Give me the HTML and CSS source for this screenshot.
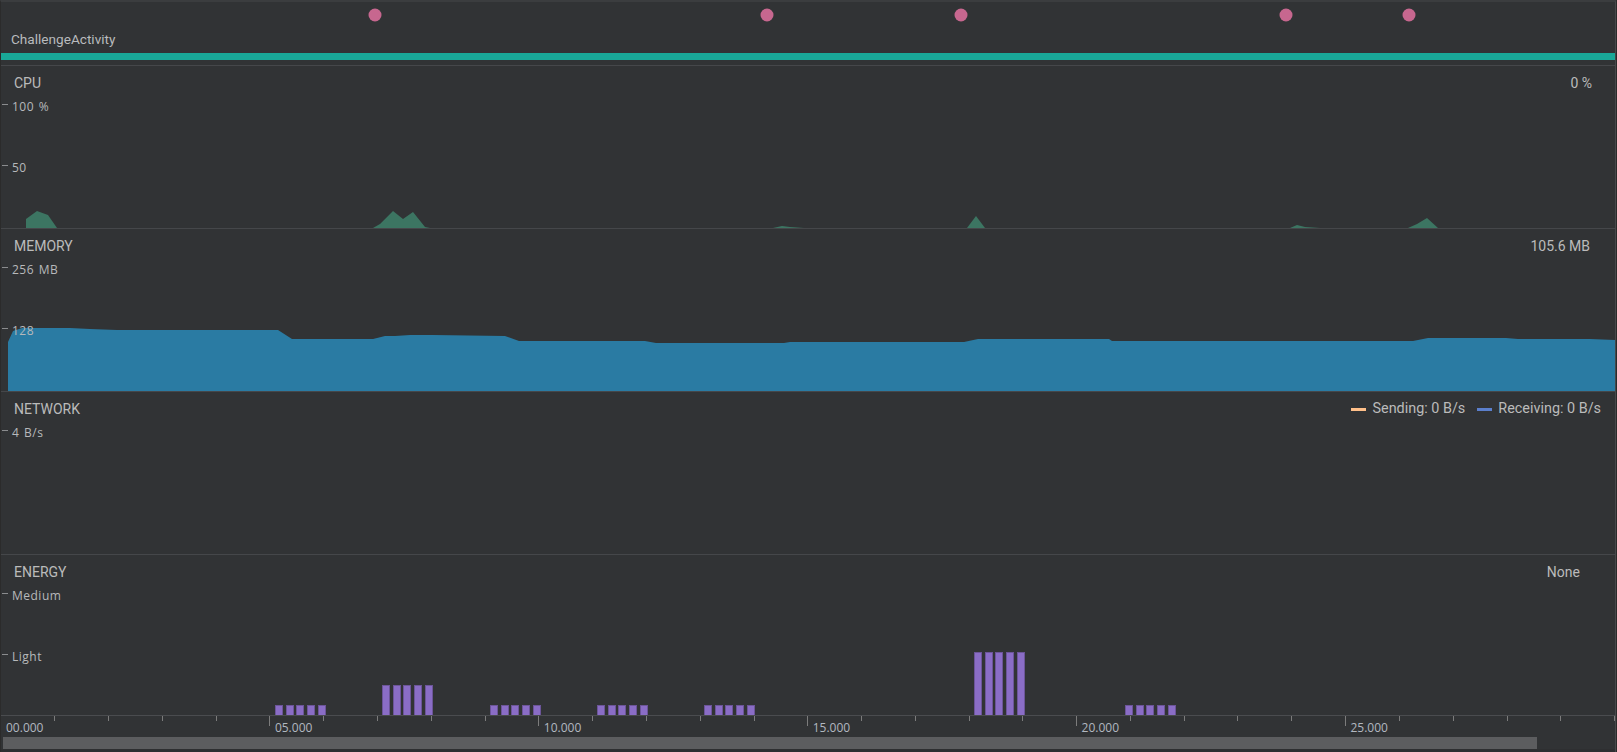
FILE: index.html
```html
<!DOCTYPE html>
<html>
<head>
<meta charset="utf-8">
<title>Profiler</title>
<link rel="stylesheet" href="styles.css">
</head>
<body>
<div class="app">
  <div class="events">
    <svg class="dots" viewBox="1 2 1614 26" width="1614" height="26">
      <g fill="#c7678f">
        <circle cx="375" cy="15" r="6.5"/>
        <circle cx="767" cy="15" r="6.5"/>
        <circle cx="961" cy="15" r="6.5"/>
        <circle cx="1286" cy="15" r="6.5"/>
        <circle cx="1409" cy="15" r="6.5"/>
      </g>
    </svg>
    <div class="activity">ChallengeActivity</div>
  </div>
  <div class="lifecycle"></div>
  <div class="gap"></div>

  <section class="monitor">
    <svg class="chart" viewBox="1 66 1614 162" width="1614" height="162">
      <g fill="#3c7562">
        <polygon points="26,228 26,219 37,211 48,215 57,228"/>
        <polygon points="373,228 380,224 393,211 403,219 413,212 425,227 430,228"/>
        <polygon points="773,228 782,226 790,227 804,228"/>
        <polygon points="967,228 976,216 985,228"/>
        <polygon points="1290,228 1297,225 1305,227 1320,228"/>
        <polygon points="1408,228 1417,224 1427,218 1438,228"/>
      </g>
    </svg>
    <div class="overlay">
      <div class="head"><span>CPU</span><span class="value">0 %</span></div>
      <div class="ylabel first"><span class="tick"></span><span>100 %</span></div>
      <div class="ylabel second"><span class="tick"></span><span>50</span></div>
    </div>
  </section>

  <section class="monitor">
    <svg class="chart" viewBox="1 229 1614 162" width="1614" height="162">
      <polygon fill="#2a7ba3" points="8,391 8,342 13,331 22,328 70,328 90,329 117,330 278,330 292,339 373,339 385,336 395,336 410,335 433,335 505,336 519,341 645,341 656,343 784,343 790,342 964,342 978,339 1109,339 1112,341 1413,341 1428,338 1506,338 1518,339 1590,339 1615,340 1615,391"/>
    </svg>
    <div class="overlay">
      <div class="head mem"><span>MEMORY</span><span class="value">105.6 MB</span></div>
      <div class="ylabel first"><span class="tick"></span><span>256 MB</span></div>
      <div class="ylabel second"><span class="tick"></span><span>128</span></div>
    </div>
  </section>

  <section class="monitor">
    <div class="overlay">
      <div class="head net">
        <span>NETWORK</span>
        <span class="legend">
          <span class="item"><span class="swatch send"></span>Sending: 0 B/s</span>
          <span class="item"><span class="swatch recv"></span>Receiving: 0 B/s</span>
        </span>
      </div>
      <div class="ylabel first"><span class="tick"></span><span>4 B/s</span></div>
    </div>
  </section>

  <section class="monitor energy">
    <svg class="chart" viewBox="1 555 1614 160" width="1614" height="160">
      <g fill="#8a6dc6" stroke="#6c5599" stroke-width="1">
        <rect x="275.5" y="705.5" width="7" height="10"/>
        <rect x="286.5" y="705.5" width="7" height="10"/>
        <rect x="296.5" y="705.5" width="7" height="10"/>
        <rect x="307.5" y="705.5" width="7" height="10"/>
        <rect x="318.5" y="705.5" width="7" height="10"/>

        <rect x="382.5" y="685.5" width="7" height="30"/>
        <rect x="393.5" y="685.5" width="7" height="30"/>
        <rect x="403.5" y="685.5" width="7" height="30"/>
        <rect x="414.5" y="685.5" width="7" height="30"/>
        <rect x="425.5" y="685.5" width="7" height="30"/>

        <rect x="490.5" y="705.5" width="7" height="10"/>
        <rect x="501.5" y="705.5" width="7" height="10"/>
        <rect x="511.5" y="705.5" width="7" height="10"/>
        <rect x="522.5" y="705.5" width="7" height="10"/>
        <rect x="533.5" y="705.5" width="7" height="10"/>

        <rect x="597.5" y="705.5" width="7" height="10"/>
        <rect x="608.5" y="705.5" width="7" height="10"/>
        <rect x="618.5" y="705.5" width="7" height="10"/>
        <rect x="629.5" y="705.5" width="7" height="10"/>
        <rect x="640.5" y="705.5" width="7" height="10"/>

        <rect x="704.5" y="705.5" width="7" height="10"/>
        <rect x="715.5" y="705.5" width="7" height="10"/>
        <rect x="725.5" y="705.5" width="7" height="10"/>
        <rect x="736.5" y="705.5" width="7" height="10"/>
        <rect x="747.5" y="705.5" width="7" height="10"/>

        <rect x="974.5" y="652.5" width="7" height="63"/>
        <rect x="985.5" y="652.5" width="7" height="63"/>
        <rect x="995.5" y="652.5" width="7" height="63"/>
        <rect x="1006.5" y="652.5" width="7" height="63"/>
        <rect x="1017.5" y="652.5" width="7" height="63"/>

        <rect x="1125.5" y="705.5" width="7" height="10"/>
        <rect x="1136.5" y="705.5" width="7" height="10"/>
        <rect x="1146.5" y="705.5" width="7" height="10"/>
        <rect x="1157.5" y="705.5" width="7" height="10"/>
        <rect x="1168.5" y="705.5" width="7" height="10"/>
      </g>
    </svg>
    <div class="overlay">
      <div class="head en"><span>ENERGY</span><span class="value">None</span></div>
      <div class="ylabel first"><span class="tick"></span><span>Medium</span></div>
      <div class="ylabel second"><span class="tick"></span><span>Light</span></div>
    </div>
  </section>

  <div class="axis">
    <svg class="ticks" viewBox="1 716 1614 21" width="1614" height="21">
      <path stroke="#7c7c7c" stroke-width="1" fill="none" shape-rendering="crispEdges"
        d="M54.5 716v5 M108.5 716v5 M162.5 716v5 M216.5 716v5 M269.5 716v10
           M323.5 716v5 M377.5 716v5 M431.5 716v5 M485.5 716v5 M538.5 716v10
           M592.5 716v5 M646.5 716v5 M700.5 716v5 M754.5 716v5 M807.5 716v10
           M861.5 716v5 M915.5 716v5 M969.5 716v5 M1022.5 716v5 M1076.5 716v10
           M1130.5 716v5 M1184.5 716v5 M1237.5 716v5 M1291.5 716v5 M1345.5 716v10
           M1399.5 716v5 M1453.5 716v5 M1507.5 716v5 M1560.5 716v5 M1614.5 716v5"/>
    </svg>
    <div class="labels">
      <span>00.000</span><span>05.000</span><span>10.000</span><span>15.000</span><span>20.000</span><span>25.000</span>
    </div>
  </div>
  <div class="scroll"><div class="thumb"></div></div>
</div>
</body>
</html>
```
FILE: styles.css
```css
html, body {
  margin: 0;
  padding: 0;
  background: #2b2b2b;
}

.app {
  width: 1616px;
  height: 752px;
  box-sizing: border-box;
  background: #313335;
  border-top: 2px solid #3b3d3f;
  border-left: 1px solid #2b2b2b;
  border-right: 1px solid #47494b;
  display: flex;
  flex-direction: column;
  font-family: Roboto, "Noto Sans", sans-serif;
  color: #bbbbbb;
  overflow: hidden;
}

.events {
  height: 51px;
  display: flex;
  flex-direction: column;
}

.dots {
  display: block;
}

.activity {
  margin-top: 3px;
  padding-left: 10px;
  font-size: 13.6px;
  line-height: 16px;
  color: #b9bbbd;
}

.lifecycle {
  height: 7px;
  background: #19a898;
}

.gap {
  height: 5px;
  border-bottom: 1px solid #45474a;
}

.monitor {
  height: 162px;
  display: grid;
  border-bottom: 1px solid #45474a;
}

.monitor.energy {
  height: 160px;
  border-bottom-color: #4a4c4f;
}

.chart {
  grid-area: 1 / 1;
  display: block;
}

.overlay {
  grid-area: 1 / 1;
  display: flex;
  flex-direction: column;
  padding-top: 9px;
}

.head {
  display: flex;
  justify-content: space-between;
  align-items: center;
  height: 16px;
  line-height: 16px;
  font-size: 14px;
  padding: 0 23px 0 13px;
}

.head.mem {
  padding-right: 25px;
}

.head.en {
  padding-right: 35px;
}

.head.net {
  padding-right: 14px;
}

.legend {
  display: flex;
  gap: 12px;
  font-size: 14.4px;
}

.legend .item {
  display: flex;
  align-items: center;
}

.swatch {
  width: 15px;
  height: 3px;
  margin-right: 6px;
}

.swatch.send {
  background: #ffc08a;
}

.swatch.recv {
  background: #5b7fcc;
}

.ylabel {
  display: flex;
  align-items: flex-start;
  height: 14px;
  margin-left: 1px;
  font-family: "Open Sans", "Liberation Sans", sans-serif;
  font-size: 12px;
  line-height: 14px;
  letter-spacing: 0.5px;
  word-spacing: 1px;
  color: #b7b9bb;
}

.ylabel.first {
  margin-top: 9px;
}

.ylabel.second {
  margin-top: 47px;
}

.tick {
  width: 6px;
  height: 1px;
  margin-top: 4px;
  margin-right: 4px;
  background: #8a8c8e;
}

.axis {
  height: 21px;
  display: grid;
}

.ticks {
  grid-area: 1 / 1;
  display: block;
}

.labels {
  grid-area: 1 / 1;
  display: flex;
  padding-top: 5px;
  font-family: "Open Sans", "Liberation Sans", sans-serif;
  font-size: 12px;
  line-height: 14px;
  color: #b2b8c0;
}

.labels span {
  width: 268.9px;
  flex: none;
  box-sizing: border-box;
  padding-left: 5px;
}

.scroll {
  height: 12px;
  padding-left: 2px;
  border-bottom: 3px solid #2e2f31;
}

.thumb {
  width: 1534px;
  height: 12px;
  background: #5c5d5f;
}
```
